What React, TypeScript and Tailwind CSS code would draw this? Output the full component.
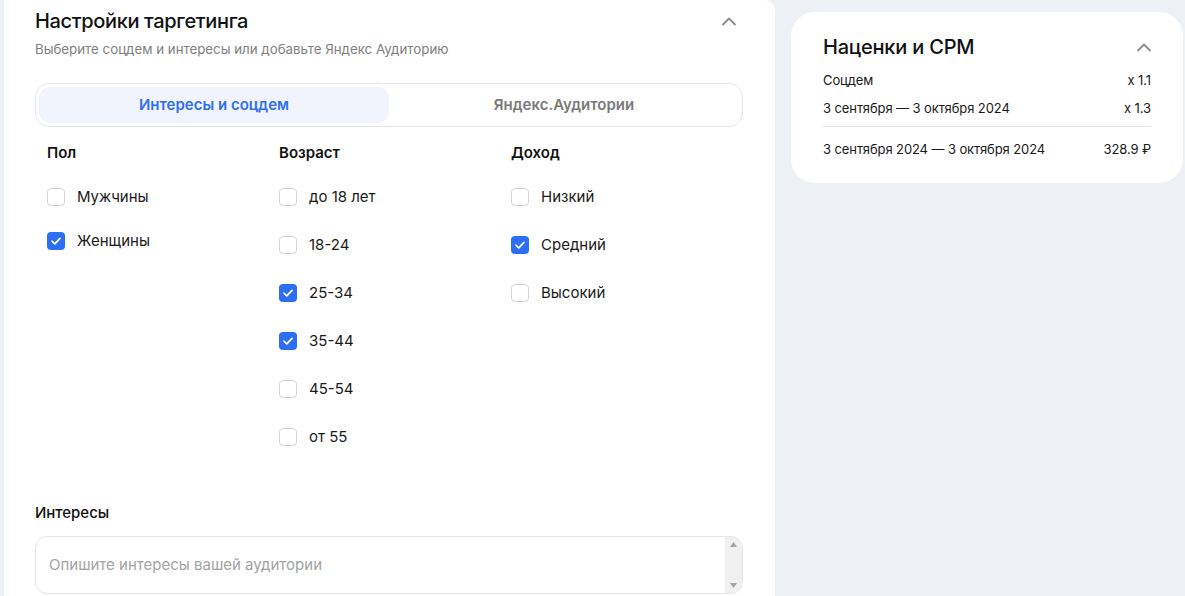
import React from "react";

const font = { fontFamily: "Inter, 'Noto Sans', sans-serif" };

function Chevron({ className }: { className?: string }) {
  return (
    <svg className={className} width="16" height="10" viewBox="0 0 16 10" fill="none">
      <path d="M2 8.5 L8 2.5 L14 8.5" stroke="#8c8c8c" strokeWidth="1.8" strokeLinecap="round" strokeLinejoin="round" />
    </svg>
  );
}

function Checkbox({ checked, label }: { checked?: boolean; label: string }) {
  return (
    <div className="flex h-6 items-center gap-[12px]">
      {checked ? (
        <div className="flex h-[18px] w-[18px] items-center justify-center rounded-[4px] bg-[#2a6ff5]">
          <svg width="12" height="10" viewBox="0 0 12 10" fill="none">
            <path d="M2 5.2 L4.8 7.8 L10 2.4" stroke="white" strokeWidth="1.8" strokeLinecap="round" strokeLinejoin="round" />
          </svg>
        </div>
      ) : (
        <div className="h-[18px] w-[18px] rounded-[4px] border border-[#d3d3d3] bg-white" />
      )}
      <span className="text-[15px] text-[#1a1a1a]">{label}</span>
    </div>
  );
}

function Column({ title, items, gap }: { title: string; items: [string, boolean][]; gap: string }) {
  return (
    <div className="w-[232px]">
      <div className="h-5 text-[15px] leading-5 font-semibold text-[#111]">{title}</div>
      <div className={`mt-[22px] flex flex-col ${gap}`}>
        {items.map(([l, c]) => (
          <Checkbox key={l} label={l} checked={c} />
        ))}
      </div>
    </div>
  );
}

export default function App() {
  return (
    <div className="flex h-[596px] w-[1185px] gap-4 overflow-hidden bg-[#edf0f5] pl-[4px]" style={font}>
      <div className="h-[620px] w-[771px] shrink-0 rounded-tr-[10px] bg-white pt-[9px] pl-[31px] pr-[32px]">
        <div className="flex items-center justify-between">
          <div className="text-[20px] leading-6 font-medium tracking-[-0.35px] text-[#111]">Настройки таргетинга</div>
          <Chevron className="mr-[6px]" />
        </div>
        <div className="mt-[8px] text-[13.3px] leading-4 text-[#7f7f7f]">
          Выберите соцдем и интересы или добавьте Яндекс Аудиторию
        </div>
        <div className="mt-[26px] flex h-[44px] rounded-[14px] border border-[#e6e6e6] p-[3px]">
          <div className="flex flex-1 items-center justify-center rounded-[11px] bg-[#f1f4fd] text-[15px] font-semibold text-[#2f6ff0]">
            Интересы и соцдем
          </div>
          <div className="flex flex-1 items-center justify-center text-[15px] font-semibold text-[#7a7a7a]">
            Яндекс.Аудитории
          </div>
        </div>
        <div className="mt-[16px] flex pl-[12px]">
          <Column title="Пол" gap="gap-[20px]" items={[["Мужчины", false], ["Женщины", true]]} />
          <Column
            title="Возраст"
            gap="gap-[24px]"
            items={[
              ["до 18 лет", false],
              ["18-24", false],
              ["25-34", true],
              ["35-44", true],
              ["45-54", false],
              ["от 55", false],
            ]}
          />
          <Column title="Доход" gap="gap-[24px]" items={[["Низкий", false], ["Средний", true], ["Высокий", false]]} />
        </div>
        <div className="mt-[54px] text-[15px] leading-5 font-medium text-[#111]">Интересы</div>
        <div className="mt-[13px] flex h-[58px] overflow-hidden rounded-[12px] border border-[#e6e6e6]">
          <div className="flex flex-1 items-center pl-[13px] text-[15px] text-[#a3a3a3]">
            Опишите интересы вашей аудитории
          </div>
          <div className="flex w-[17px] flex-col items-center justify-between bg-[#f0f0f0] py-[5px]">
            <svg width="7" height="5" viewBox="0 0 7 5"><path d="M3.5 0 L7 5 L0 5 Z" fill="#a3a3a3" /></svg>
            <svg width="7" height="5" viewBox="0 0 7 5"><path d="M0 0 L7 0 L3.5 5 Z" fill="#a3a3a3" /></svg>
          </div>
        </div>
      </div>
      <div className="mt-[12px] h-[171px] w-[392px] shrink-0 rounded-[24px] bg-white px-[32px] pt-[23px]">
        <div className="flex items-center justify-between">
          <div className="text-[20px] leading-6 font-medium tracking-[-0.2px] text-[#111]">Наценки и CPM</div>
          <Chevron className="-mr-[1px]" />
        </div>
        <div className="mt-[13px] flex flex-col gap-[12px] text-[13px] leading-4 tracking-[-0.1px] text-[#1a1a1a]">
          <div className="flex justify-between">
            <span>Соцдем</span>
            <span>x 1.1</span>
          </div>
          <div className="flex justify-between">
            <span>3 сентября — 3 октября 2024</span>
            <span>x 1.3</span>
          </div>
        </div>
        <div className="mt-[10px] h-px bg-[#e3e3e3]" />
        <div className="mt-[14px] flex justify-between text-[13px] leading-4 tracking-[-0.1px] text-[#1a1a1a]">
          <span>3 сентября 2024 — 3 октября 2024</span>
          <span>328.9 ₽</span>
        </div>
      </div>
    </div>
  );
}
